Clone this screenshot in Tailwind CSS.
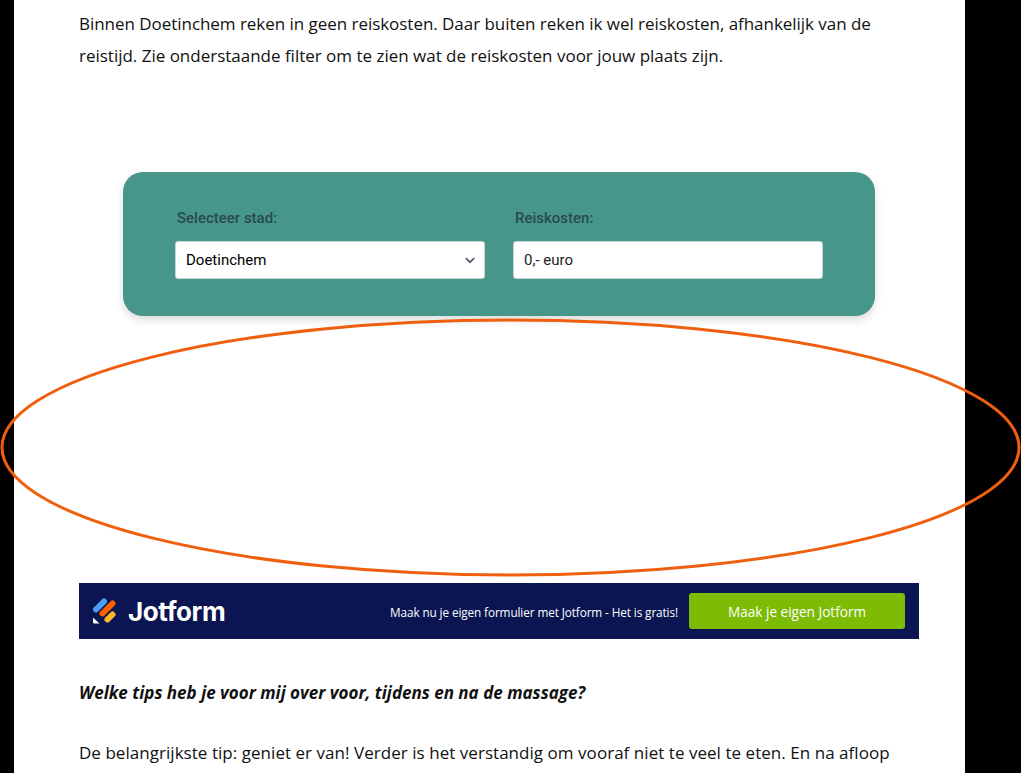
<!DOCTYPE html>
<html lang="nl">
<head>
<meta charset="utf-8">
<script src="https://cdn.jsdelivr.net/npm/@tailwindcss/browser@4"></script>
<title>Reiskosten</title>
</head>
<body class="bg-black overflow-hidden">
<div class="relative h-[773px] w-[1021px] overflow-hidden bg-black">
  <main class="ml-[14px] h-[773px] w-[951px] overflow-hidden bg-white pl-[65px] pt-2 font-['Open_Sans',sans-serif] text-[17px] leading-8 text-[#111]">
    <p class="w-[810px] tracking-[-0.04px]">Binnen Doetinchem reken in geen reiskosten. Daar buiten reken ik wel reiskosten, afhankelijk van de<br><span class="tracking-[-0.01px]">reistijd. Zie onderstaande filter om te zien wat de reiskosten voor jouw plaats zijn.</span></p>

    <section class="ml-11 mt-[100px] flex h-36 w-[752px] gap-[28px] rounded-[20px] bg-[#46978a] pl-[52px] pt-[37px] shadow-[0_4px_8px_rgba(0,0,0,0.14)] font-['Roboto',sans-serif]">
      <div class="w-[310px]">
        <label class="ml-0.5 block text-[15px] font-medium leading-[18px] text-[#2a4a50]">Selecteer stad:</label>
        <div class="mt-[14px] flex h-[38px] items-center justify-between rounded-[3px] border border-[#c9d3d6] bg-white pl-2.5 pr-[8px] text-[15px] text-black">
          <span>Doetinchem</span>
          <svg class="h-3 w-3 text-[#4b5563]" viewBox="0 0 12 12" fill="none" stroke="currentColor" stroke-width="1.7"><path d="M1.8 4l4.2 4.2L10.200 4"/></svg>
        </div>
      </div>
      <div class="w-[310px]">
        <label class="ml-0.5 block text-[15px] font-medium leading-[18px] text-[#2a4a50]">Reiskosten:</label>
        <div class="mt-[14px] flex h-[38px] items-center rounded-[3px] border border-[#c9d3d6] bg-white pl-2.5 text-[15px] text-[#222]">0,- euro</div>
      </div>
    </section>

    <section class="mt-[267px] flex h-14 w-[840px] items-center bg-[#0a1551] pl-3.5 pr-3.5">
      <svg class="h-[26px] w-[24px] shrink-0" viewBox="0 0 24 26" aria-hidden="true">
        <path d="M3 11.500 11 3.500" stroke="#4c9ff5" stroke-width="6" stroke-linecap="round"/>
        <path d="M9.500 15.500 19.500 5.500" stroke="#ff6100" stroke-width="6" stroke-linecap="round"/>
        <path d="M14.500 21.500 19.500 16.500" stroke="#ffb629" stroke-width="6" stroke-linecap="round"/>
        <path d="M0 19.500 6.500 25.500H1.500Q0 25.500 0 24Z" fill="#fff"/>
      </svg>
      <span class="ml-[11px] pt-px font-['Inter',sans-serif] text-[26px] font-bold leading-none tracking-[-0.4px] text-white">Jotform</span>
      <span class="ml-auto whitespace-nowrap pt-px text-[11.750px] tracking-[-0.1px] text-white">Maak nu je eigen formulier met Jotform - Het is gratis!</span>
      <a class="ml-[11px] flex h-9 w-[216px] items-center justify-center rounded-[3px] bg-[#7dbb05] pt-px text-[13.600px] text-white">Maak je eigen Jotform</a>
    </section>

    <p class="mt-[38px] font-bold italic">Welke tips heb je voor mij over voor, tijdens en na de massage?</p>
    <p class="mt-7 w-[830px] tracking-[0.04px]">De belangrijkste tip: geniet er van! Verder is het verstandig om vooraf niet te veel te eten. En na afloop</p>
  </main>

  <svg class="pointer-events-none absolute left-0 top-0" width="1021" height="773" viewBox="0 0 1021 773" fill="none" aria-hidden="true">
    <ellipse cx="510.500" cy="447.500" rx="508.500" ry="127.500" stroke="#f05f0e" stroke-width="3"/>
  </svg>
</div>
</body>
</html>
